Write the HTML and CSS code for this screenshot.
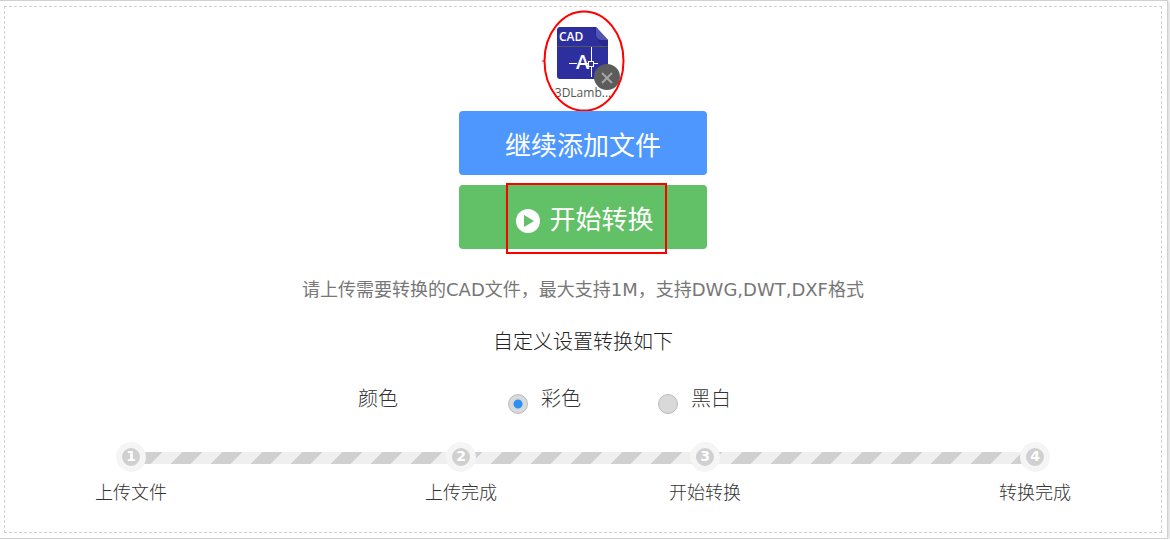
FILE: index.html
```html
<!DOCTYPE html>
<html lang="zh-CN">
<head>
<meta charset="utf-8">
<meta name="viewport" content="width=device-width, initial-scale=1">
<title>CAD转换</title>
<link rel="stylesheet" href="styles.css">
</head>
<body>
<main class="panel">
  <form class="drop-area">
    <div class="file">
      <div class="file-thumb">
        <svg class="file-icon" viewBox="0 0 51 52" role="img" aria-label="CAD">
          <path d="M3 0H39L51 13V49Q51 52 48 52H3Q0 52 0 49V3Q0 0 3 0Z" fill="#2d2f9f"/>
          <path d="M37 0L51 14V21Q39 18 37 0Z" fill="#27288a"/>
          <path d="M39 0L51 13H44Q39 12 39 7Z" fill="#5254b4"/>
          <path d="M0 19.5H51" stroke="#55565c" stroke-width="1"/>
          <text class="icon-type" x="2" y="14">CAD</text>
          <text class="icon-letter" x="19" y="42">A</text>
          <path d="M12 36.5H20M29 36.5H31M37 36.5H41M34.500 20V34M34.500 39V50" stroke="#fff" fill="none"/>
          <rect x="31.500" y="34.500" width="5" height="5" stroke="#fff" fill="#2d2f9f"/>
        </svg>
        <button class="file-remove" type="button" aria-label="删除">
          <svg viewBox="0 0 26 26"><circle cx="13" cy="13" r="13" fill="#5c5c5c"/><path d="M8 9L18 19M18 9L8 19" stroke="#a5a5a5" stroke-width="2"/></svg>
        </button>
      </div>
      <span class="file-name">3DLamb...</span>
      <svg class="mark-ellipse" viewBox="0 0 84 102" aria-hidden="true"><ellipse cx="43" cy="51" rx="39.500" ry="49.500" fill="none" stroke="#f00" stroke-width="2"/><path d="M1 51H4" stroke="#f00"/></svg>
    </div>

    <div class="actions">
      <button class="btn btn-add" type="button">继续添加文件</button>
      <button class="btn btn-start" type="button">
        <svg class="play" viewBox="0 0 24 24" aria-hidden="true"><circle cx="12" cy="12" r="12" fill="#fff"/><path d="M8 6L18 12L8 18Z" fill="#62c066"/></svg>
        <span>开始转换</span>
        <i class="mark-box"></i>
      </button>
    </div>

    <p class="note">请上传需要转换的CAD文件，最大支持1M，支持DWG,DWT,DXF格式</p>
    <h2 class="heading">自定义设置转换如下</h2>

    <div class="options" role="radiogroup" aria-labelledby="color-label">
      <span id="color-label">颜色</span>
      <label class="option"><input class="radio" type="radio" name="color" checked>彩色</label>
      <label class="option"><input class="radio" type="radio" name="color">黑白</label>
    </div>

    <ol class="steps">
      <li class="step step-1"><span class="dot">1</span>上传文件</li>
      <li class="step step-2"><span class="dot">2</span>上传完成</li>
      <li class="step step-3"><span class="dot">3</span>开始转换</li>
      <li class="step step-4"><span class="dot">4</span>转换完成</li>
    </ol>
  </form>
</main>
</body>
</html>
```

FILE: styles.css
```css
* {
  box-sizing: border-box;
}

body {
  margin: 0;
  background: #fff;
  color: #333;
  font-family: "Open Sans", "Noto Sans CJK SC", sans-serif;
  font-weight: 300;
}

.panel {
  margin-right: 2px;
  padding: 5px 5px 5px 4px;
  border: 1px solid #d0d0d0;
  border-left: 0;
  box-shadow: 1px 1px 4px #ccc;
}

.drop-area {
  display: flex;
  flex-direction: column;
  align-items: center;
  padding: 20px 90px 28px;
  border: 1px dashed #d0d0d0;
}

.file {
  position: relative;
  display: flex;
  flex-direction: column;
  align-items: center;
}

.file-thumb {
  position: relative;
}

.file-icon {
  display: block;
  width: 51px;
  height: 52px;
}

.icon-type {
  fill: #fff;
  font-size: 12px;
  font-weight: 600;
}

.icon-letter {
  fill: #fff;
  font-size: 20px;
  font-weight: 600;
}

.file-remove {
  position: absolute;
  right: -12px;
  bottom: -11px;
  width: 26px;
  height: 26px;
  padding: 0;
  border: 0;
  border-radius: 50%;
  background: none;
}

.file-remove svg {
  display: block;
}

.file-name {
  margin-top: 6px;
  font-size: 12px;
  font-weight: 400;
  line-height: 16px;
  color: #555;
}

.mark-ellipse {
  position: absolute;
  top: -17px;
  left: 50%;
  width: 84px;
  height: 102px;
  margin-left: -42px;
  pointer-events: none;
}

.actions {
  display: flex;
  flex-direction: column;
  gap: 10px;
  margin-top: 10px;
}

.btn {
  position: relative;
  display: flex;
  align-items: center;
  justify-content: center;
  gap: 9px;
  width: 248px;
  height: 64px;
  padding: 4px 0 0;
  border: 0;
  border-radius: 4px;
  color: #fff;
  font-family: inherit;
  font-size: 26px;
  font-weight: 400;
  line-height: 32px;
}

.btn-add {
  background: #4d97ff;
}

.btn-start {
  padding-left: 4px;
  background: #62c066;
}

.play {
  width: 24px;
  height: 24px;
  margin-top: 4px;
}

.mark-box {
  position: absolute;
  inset: -2px 40px -5px 47px;
  border: 2px solid #f00;
  pointer-events: none;
}

.note {
  margin: 29px 0 0;
  font-family: "DejaVu Sans", "Noto Sans CJK SC", sans-serif;
  font-size: 18px;
  font-weight: 400;
  line-height: 24px;
  color: #777;
}

.heading {
  margin: 26px 0 0;
  font-size: 20px;
  font-weight: 300;
  line-height: 28px;
  color: #222;
}

.options {
  display: grid;
  grid-template-columns: 150px 150px 74px;
  margin-right: 76px;
  margin-top: 29px;
  font-size: 20px;
  line-height: 28px;
}

.option {
  display: flex;
  gap: 13px;
}

.radio {
  width: 20px;
  height: 20px;
  margin: 9px 0 0;
  border: 1px solid #bbb;
  border-radius: 50%;
  background: #d9d9d9;
  appearance: none;
}

.radio:checked {
  background: radial-gradient(circle, #2a90f5 4px, #d9d9d9 5px);
}

.steps {
  position: relative;
  display: grid;
  grid-template-columns: 72px 3fr 72px 2fr 72px 3fr 72px;
  align-self: stretch;
  margin: 28px 0 0;
  padding: 0;
  list-style: none;
  font-size: 18px;
  line-height: 24px;
}

.steps::before {
  position: absolute;
  top: 10px;
  right: 36px;
  left: 36px;
  height: 12px;
  background: linear-gradient(135deg, #d0d0d0 25%, #efefef 25%, #efefef 50%, #d0d0d0 50%, #d0d0d0 75%, #efefef 75%) 12px 0 / 40px 40px;
  content: "";
}

.step {
  position: relative;
  display: flex;
  flex-direction: column;
  align-items: center;
  gap: 8px;
  white-space: nowrap;
}

.step-2 {
  grid-column: 3;
}

.step-3 {
  grid-column: 5;
}

.step-4 {
  grid-column: 7;
}

.dot {
  width: 30px;
  height: 30px;
  border: 6px solid #f5f5f5;
  border-radius: 50%;
  background: #d0d0d0;
  color: #fff;
  font: bold 14px/16px "DejaVu Sans", sans-serif;
  text-align: center;
}
```
